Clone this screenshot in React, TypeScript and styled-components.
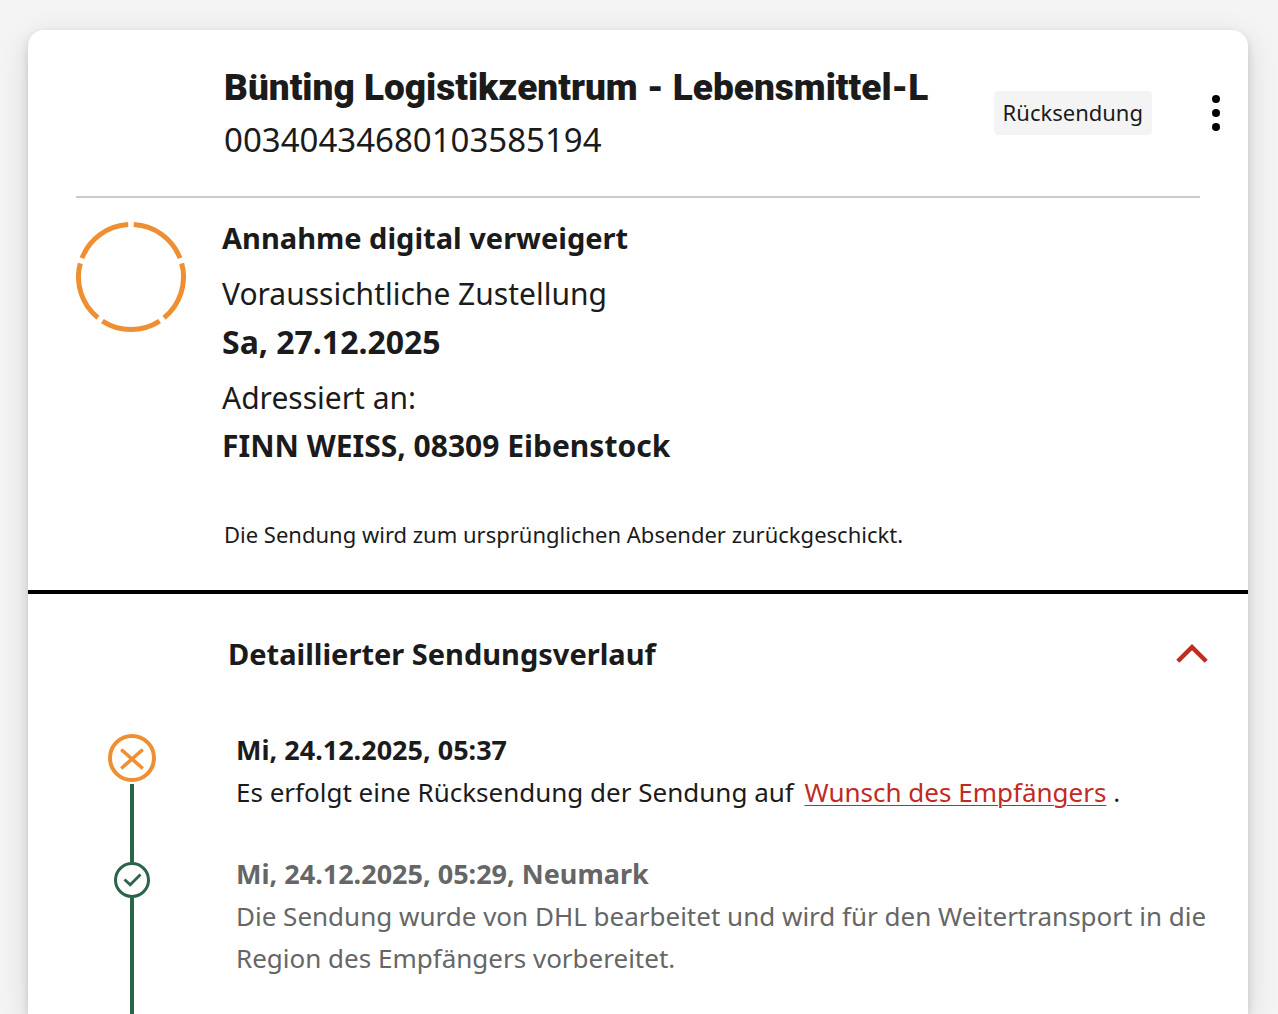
import React, { useState } from "react";
import styled, { createGlobalStyle } from "styled-components";

const color = {
  page: "#f4f4f4",
  text: "#1b1b1b",
  muted: "#666666",
  orange: "#ef8f33",
  green: "#2b6549",
  red: "#c22a24",
};

const GlobalStyle = createGlobalStyle`
  *, *::before, *::after { box-sizing: border-box; }
  body {
    margin: 0;
    background: ${color.page};
    color: ${color.text};
    font-family: "Noto Sans", "Open Sans", sans-serif;
  }
  h1, h2, h3, p, dl, dt, dd, ol { margin: 0; padding: 0; }
  ol { list-style: none; }
`;

const Page = styled.main`
  display: flex;
  min-height: 100vh;
  padding: 30px 30px 0 28px;
`;

const Card = styled.article`
  flex: 1;
  min-width: 0;
  display: flex;
  flex-direction: column;
  background: #fff;
  border-radius: 16px 16px 0 0;
  box-shadow: 0 8px 32px rgba(0, 0, 0, 0.12), 0 4px 8px rgba(0, 0, 0, 0.14);
`;

const Header = styled.header`
  display: flex;
  align-items: center;
  padding: 30px 16px 30px 196px;
`;

const Titles = styled.div`
  flex: 1;
  min-width: 0;
  padding-bottom: 2px;
`;

const Sender = styled.h1`
  font-family: Roboto, "Noto Sans", sans-serif;
  font-size: 37px;
  line-height: 56px;
  font-weight: 900;
`;

const TrackingNumber = styled.p`
  font-size: 33px;
  line-height: 48px;
`;

const Badge = styled.span`
  padding: 3px 9px 5px;
  border-radius: 4px;
  background: ${color.page};
  font-size: 22px;
  line-height: 36px;
`;

const IconButton = styled.button`
  display: flex;
  align-items: center;
  justify-content: center;
  width: 32px;
  height: 48px;
  padding: 0;
  border: 0;
  background: none;
  color: inherit;
  cursor: pointer;
`;

const MenuButton = styled(IconButton)`
  margin-left: 48px;
`;

const Divider = styled.hr`
  width: auto;
  height: 2px;
  margin: 0 48px;
  border: 0;
  background: #cccccc;
`;

const Summary = styled.section`
  display: grid;
  grid-template-columns: 110px 1fr;
  column-gap: 36px;
  padding: 16px 48px 0;
`;

const Ring = styled.svg`
  margin-top: 8px;
`;

const Facts = styled.div`
  display: flex;
  flex-direction: column;
  gap: 8px;
  font-size: 30px;
  line-height: 48px;
`;

const Status = styled.h2`
  font-size: 29px;
  font-weight: 700;
`;

const FactLabel = styled.dt``;

const FactValue = styled.dd<{ $large?: boolean }>`
  font-size: ${(p) => (p.$large ? 32 : 30)}px;
  font-weight: 700;
`;

const Note = styled.p`
  padding: 46px 48px 38px 196px;
  font-size: 22px;
  line-height: 36px;
`;

const History = styled.section`
  flex: 1;
  display: flex;
  flex-direction: column;
  border-top: 4px solid #000;
`;

const HistoryHeader = styled.div`
  display: flex;
  align-items: center;
  justify-content: space-between;
  padding: 36px 40px 51px 200px;
`;

const HistoryTitle = styled.h2`
  font-size: 29px;
  line-height: 48px;
  font-weight: 700;
`;

const Timeline = styled.ol`
  flex: 1;
  display: flex;
  flex-direction: column;
`;

const Event = styled.li<{ $past?: boolean }>`
  display: grid;
  grid-template-columns: 48px 1fr;
  column-gap: 80px;
  padding: 0 40px 0 80px;
  color: ${(p) => (p.$past ? color.muted : color.text)};
  &:last-child { flex: 1; }
`;

const Rail = styled.div`
  display: flex;
  flex-direction: column;
  align-items: center;
`;

const Track = styled.span<{ $lead?: boolean }>`
  width: 4px;
  flex: ${(p) => (p.$lead ? "0 0 9px" : "1")};
  background: ${color.green};
`;

const CurrentMark = styled.svg`
  flex: none;
  margin: 5px 0 2px;
`;

const PastMark = styled.svg`
  flex: none;
`;

const EventBody = styled.div`
  min-width: 0;
  padding-bottom: 40px;
  font-size: 26px;
  line-height: 42px;
  li:last-child > & { padding-bottom: 0; }
`;

const EventTime = styled.h3`
  font-size: 27px;
  font-weight: 700;
`;

const Link = styled.a`
  margin-left: 4px;
  color: ${color.red};
  text-decoration: underline;
  text-decoration-thickness: 1px;
  text-underline-offset: 3px;
`;

function ProgressRing() {
  const r = 52.5;
  const seg = (from: number, to: number) => {
    const pt = (deg: number) => {
      const a = (deg * Math.PI) / 180;
      return `${55 + r * Math.sin(a)} ${55 - r * Math.cos(a)}`;
    };
    return `M${pt(from)} A${r} ${r} 0 0 1 ${pt(to)}`;
  };
  return (
    <Ring width="110" height="110" viewBox="0 0 110 110" aria-hidden="true">
      {[
        [3, 69],
        [75, 141],
        [147, 213],
        [219, 285],
        [291, 357],
      ].map(([a, b]) => (
        <path key={a} d={seg(a, b)} fill="none" stroke={color.orange} strokeWidth="5" />
      ))}
    </Ring>
  );
}

export default function App() {
  const [open, setOpen] = useState(true);
  return (
    <>
      <GlobalStyle />
      <Page>
        <Card>
          <Header>
            <Titles>
              <Sender>Bünting Logistikzentrum - Lebensmittel-L</Sender>
              <TrackingNumber>00340434680103585194</TrackingNumber>
            </Titles>
            <Badge>Rücksendung</Badge>
            <MenuButton type="button" aria-label="Menü">
              <svg width="8" height="36" viewBox="0 0 8 36" fill="#000">
                <circle cx="4" cy="4" r="4" />
                <circle cx="4" cy="18" r="4" />
                <circle cx="4" cy="32" r="4" />
              </svg>
            </MenuButton>
          </Header>
          <Divider />
          <Summary>
            <ProgressRing />
            <Facts>
              <Status>Annahme digital verweigert</Status>
              <dl>
                <FactLabel>Voraussichtliche Zustellung</FactLabel>
                <FactValue $large>Sa, 27.12.2025</FactValue>
              </dl>
              <dl>
                <FactLabel>Adressiert an:</FactLabel>
                <FactValue>FINN WEISS, 08309 Eibenstock</FactValue>
              </dl>
            </Facts>
          </Summary>
          <Note>Die Sendung wird zum ursprünglichen Absender zurückgeschickt.</Note>
          <History>
            <HistoryHeader>
              <HistoryTitle>Detaillierter Sendungsverlauf</HistoryTitle>
              <IconButton
                type="button"
                aria-label="Sendungsverlauf ein- oder ausklappen"
                aria-expanded={open}
                onClick={() => setOpen(!open)}
              >
                <svg width="32" height="20" viewBox="0 0 32 20" fill="none">
                  <path
                    d={open ? "M1.8 17.2 16 3.2 30.2 17.2" : "M1.8 3.2 16 17.2 30.2 3.2"}
                    stroke={color.red}
                    strokeWidth="4.4"
                  />
                </svg>
              </IconButton>
            </HistoryHeader>
            {open && (
              <Timeline>
                <Event>
                  <Rail>
                    <CurrentMark width="48" height="48" viewBox="0 0 48 48" fill="none" stroke={color.orange} aria-hidden="true">
                      <circle cx="24" cy="24" r="22" strokeWidth="4" />
                      <path d="M13.2 15.5 34.8 34.5M34.8 15.5 13.2 34.5" strokeWidth="3.6" />
                    </CurrentMark>
                    <Track />
                  </Rail>
                  <EventBody>
                    <EventTime>Mi, 24.12.2025, 05:37</EventTime>
                    <p>
                      Es erfolgt eine Rücksendung der Sendung auf <Link href="#wunsch">Wunsch des Empfängers</Link> .
                    </p>
                  </EventBody>
                </Event>
                <Event $past>
                  <Rail>
                    <Track $lead />
                    <PastMark width="36" height="36" viewBox="0 0 36 36" fill="none" stroke={color.green} aria-hidden="true">
                      <circle cx="18" cy="18" r="16.5" strokeWidth="3" />
                      <path d="M10.5 17.5 16.2 22.8 26.5 12.5" strokeWidth="2.8" />
                    </PastMark>
                    <Track />
                  </Rail>
                  <EventBody>
                    <EventTime>Mi, 24.12.2025, 05:29, Neumark</EventTime>
                    <p>
                      Die Sendung wurde von DHL bearbeitet und wird für den Weitertransport in die Region des Empfängers
                      vorbereitet.
                    </p>
                  </EventBody>
                </Event>
              </Timeline>
            )}
          </History>
        </Card>
      </Page>
    </>
  );
}
